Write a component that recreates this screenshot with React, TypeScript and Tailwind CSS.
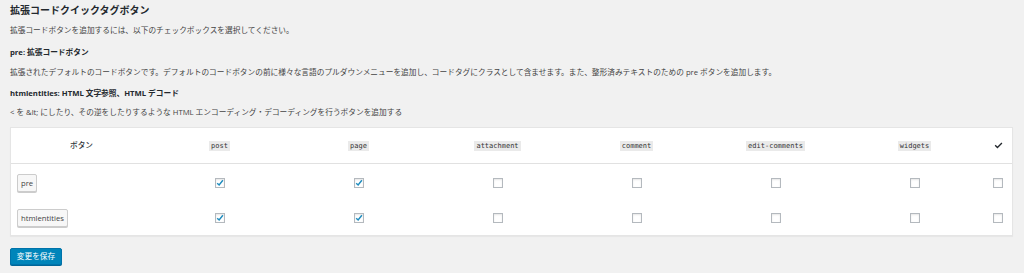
const cols = ["post", "page", "attachment", "comment", "edit-comments", "widgets"];

const rows = [
  { name: "pre", checked: [true, true, false, false, false, false, false] },
  { name: "htmlentities", checked: [true, true, false, false, false, false, false] },
];

function Checkbox({ checked }: { checked: boolean }) {
  return (
    <span className="relative inline-flex w-[10px] h-[10px] border border-[#b4b9be] bg-white shadow-[inset_0_1px_2px_rgba(0,0,0,0.1)] items-center justify-center">
      {checked && (
        <svg className="w-[8px] h-[8px]" viewBox="0 0 10 10" fill="none" stroke="#1e8cbe" strokeWidth="1.8">
          <path d="M1.5 5.2l2.4 2.3L8.6 1.6" />
        </svg>
      )}
    </span>
  );
}

export default function App() {
  return (
    <div
      className="w-[1024px] h-[273px] bg-[#f1f1f1] pl-[10px] pr-[11px] text-[#444]"
      style={{ fontFamily: '"Open Sans", "Noto Sans CJK JP", sans-serif' }}
    >
      <div className="flex flex-col">
        <h2 className="mt-[4px] h-[12px] leading-[12px] text-[10px] font-bold text-[#23282d]">
          拡張コードクイックタグボタン
        </h2>
        <p className="mt-[9px] h-[10px] leading-[10px] text-[7.7px]">
          拡張コードボタンを追加するには、以下のチェックボックスを選択してください。
        </p>
        <p className="mt-[12px] h-[10px] leading-[10px] text-[7.7px] font-bold text-[#23282d]">
          pre: 拡張コードボタン
        </p>
        <p className="mt-[10px] h-[10px] leading-[10px] text-[7.7px]">
          拡張されたデフォルトのコードボタンです。デフォルトのコードボタンの前に様々な言語のプルダウンメニューを追加し、コードタグにクラスとして含ませます。また、整形済みテキストのための pre ボタンを追加します。
        </p>
        <p className="mt-[11px] h-[10px] leading-[10px] text-[7.7px] font-bold text-[#23282d]">
          htmlentities: HTML 文字参照、HTML デコード
        </p>
        <p className="mt-[9px] h-[10px] leading-[10px] text-[7.7px]">
          &lt; を &amp;lt; にしたり、その逆をしたりするような HTML エンコーディング・デコーディングを行うボタンを追加する
        </p>

        {/* table */}
        <div className="mt-[10px] bg-white border border-[#e5e5e5] shadow-[0_1px_1px_rgba(0,0,0,0.04)]">
          <div className="grid grid-cols-[139px_repeat(6,139px)_1fr] h-[36px] items-center border-b border-[#e1e1e1] text-[#32373c]">
            <div className="text-center text-[7.7px] font-medium pl-[2px]">ボタン</div>
            {cols.map((c) => (
              <div key={c} className="flex justify-center">
                <code
                  className="px-[2px] py-[1px] bg-[#eaeaea] text-[7px] leading-[8px] text-[#333]"
                  style={{ fontFamily: '"DejaVu Sans Mono", "Liberation Mono", monospace' }}
                >
                  {c}
                </code>
              </div>
            ))}
            <div className="flex justify-center pl-[1px]">
              <svg className="w-[9px] h-[9px]" viewBox="0 0 10 10" fill="none" stroke="#23282d" strokeWidth="1.5">
                <path d="M1.3 4.8l2.5 2.5L8.8 2.2" />
              </svg>
            </div>
          </div>
          <div className="pt-[1px]">
            {rows.map((r, ri) => (
              <div
                key={r.name}
                className={`grid grid-cols-[139px_repeat(6,139px)_1fr] items-center ${ri === 0 ? "h-[36px]" : "h-[34px]"}`}
              >
                <div className="flex pl-[6px]">
                  <button className="block h-[18px] px-[3px] text-[7.7px] leading-[16px] text-[#444] bg-[#f7f7f7] border border-[#cccccc] rounded-[2px] shadow-[0_1px_0_#cccccc]">
                    {r.name}
                  </button>
                </div>
                {r.checked.map((c, i) => (
                  <div key={i} className="flex justify-center">
                    <Checkbox checked={c} />
                  </div>
                ))}
              </div>
            ))}
          </div>
        </div>

        <div className="flex mt-[12px]">
          <button className="block w-[52px] h-[17px] text-[7.7px] leading-[15px] text-white bg-[#0085ba] border border-[#0073aa] rounded-[2px] shadow-[0_1px_0_#006799]">
            変更を保存
          </button>
        </div>
      </div>
    </div>
  );
}
